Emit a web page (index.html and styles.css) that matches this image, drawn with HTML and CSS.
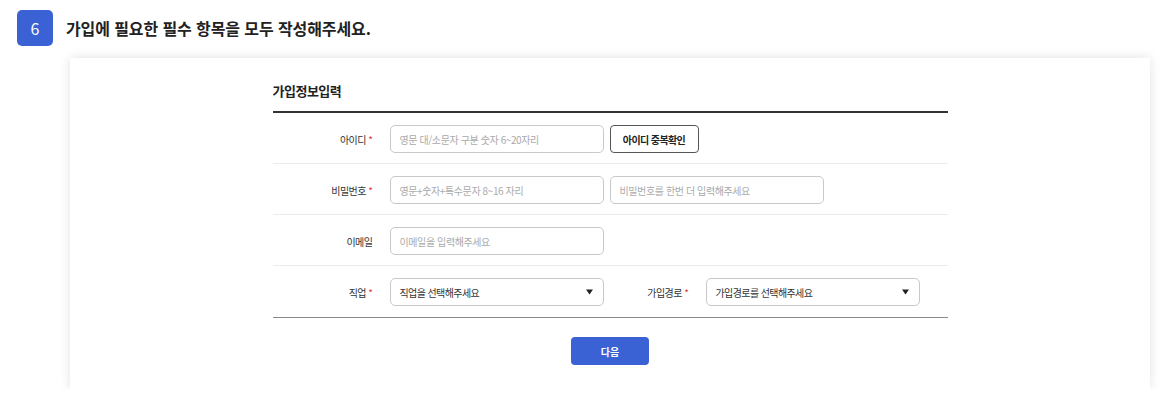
FILE: index.html
```html
<!DOCTYPE html>
<html lang="ko">
<head>
  <meta charset="UTF-8">
  <title>가입정보입력</title>
  <link rel="stylesheet" href="styles.css">
</head>
<body>
  <!-- Step header -->
  <div class="step-head">
    <div class="step-num">6</div>
    <div class="step-title">가입에 필요한 필수 항목을 모두 작성해주세요.</div>
  </div>
  <!-- Form card -->
  <div class="card">
    <div class="join-form">
      <div class="form-title">가입정보입력</div>
      <div class="form-row">
        <div class="form-label">아이디 <span class="req">*</span></div>
        <input class="form-input" type="text" placeholder="영문 대/소문자 구분 숫자 6~20자리">
        <button class="check-btn">아이디 중복확인</button>
      </div>
      <div class="form-row">
        <div class="form-label">비밀번호 <span class="req">*</span></div>
        <input class="form-input" type="password" placeholder="영문+숫자+특수문자 8~16 자리">
        <input class="form-input" type="password" placeholder="비밀번호를 한번 더 입력해주세요">
      </div>
      <div class="form-row">
        <div class="form-label">이메일</div>
        <input class="form-input" type="text" placeholder="이메일을 입력해주세요">
      </div>
      <div class="form-row last">
        <div class="form-label">직업 <span class="req">*</span></div>
        <div class="form-select">
          <span>직업을 선택해주세요</span>
          <svg width="7" height="6" viewBox="0 0 7 6"><path d="M0 0.5h7L3.5 5.5z" fill="#222"/></svg>
        </div>
        <div class="form-label second">가입경로 <span class="req">*</span></div>
        <div class="form-select">
          <span>가입경로를 선택해주세요</span>
          <svg width="7" height="6" viewBox="0 0 7 6"><path d="M0 0.5h7L3.5 5.5z" fill="#222"/></svg>
        </div>
      </div>
      <div class="form-actions">
        <button class="next-btn">다음</button>
      </div>
    </div>
  </div>
</body>
</html>
```

FILE: styles.css
```css
body {
  margin: 0;
  background: #fff;
  font-family: "Noto Sans CJK KR", "Noto Sans", sans-serif;
  color: #222;
}
.step-head {
  display: flex;
  align-items: center;
  gap: 13px;
  padding: 10px 0 0 17px;
}
.step-num {
  width: 36px;
  height: 36px;
  border-radius: 5px;
  background: #3a62d5;
  color: #fff;
  font-size: 16px;
  display: flex;
  align-items: center;
  justify-content: center;
}
.step-title {
  font-size: 16px;
  font-weight: 700;
  letter-spacing: -0.1px;
  color: #222;
}
.card {
  width: 1080px;
  margin: 12px 0 0 70px;
  background: #fff;
  box-shadow: 0 0 10px rgba(0,0,0,0.12);
  padding: 23px 0 24px 0;
}
.join-form {
  width: 675px;
  margin: 0 auto;
}
.form-title {
  font-size: 13px;
  font-weight: 700;
  line-height: 20px;
  letter-spacing: -0.5px;
  color: #222;
  padding-bottom: 10px;
  border-bottom: 2px solid #333;
}
.form-row {
  display: flex;
  align-items: center;
  padding: 12px 0 10px 0;
  border-bottom: 1px solid #ebebeb;
}
.form-row.last {
  padding-bottom: 11px;
  border-bottom: 1px solid #8a8a8a;
}
.form-label {
  width: 117px;
  box-sizing: border-box;
  padding-right: 17px;
  text-align: right;
  font-size: 10px;
  letter-spacing: -0.5px;
  color: #333;
}
.form-label.second {
  width: 102px;
}
.req {
  color: #e0383e;
}
.form-input,
.form-select {
  width: 214px;
  height: 28px;
  box-sizing: border-box;
  border: 1px solid #c9c9c9;
  border-radius: 5px;
  padding: 0 9px;
  font-family: inherit;
  font-size: 10px;
  letter-spacing: -0.4px;
  color: #333;
  background: #fff;
}
.form-input::placeholder {
  color: #aaa;
}
.form-input + .form-input {
  margin-left: 6px;
}
.form-select {
  display: flex;
  align-items: center;
  justify-content: space-between;
  padding-right: 10px;
  letter-spacing: -0.6px;
}
.check-btn {
  margin-left: 6px;
  width: 89px;
  height: 28px;
  background: #fff;
  border: 1px solid #555;
  border-radius: 4px;
  font-family: inherit;
  font-size: 10px;
  font-weight: 700;
  letter-spacing: -0.6px;
  color: #222;
  cursor: pointer;
}
.form-actions {
  display: flex;
  justify-content: center;
  padding-top: 19px;
}
.next-btn {
  width: 78px;
  height: 28px;
  border: none;
  border-radius: 4px;
  background: #3a62d5;
  color: #fff;
  font-family: inherit;
  font-size: 10px;
  font-weight: 700;
  cursor: pointer;
}
```
